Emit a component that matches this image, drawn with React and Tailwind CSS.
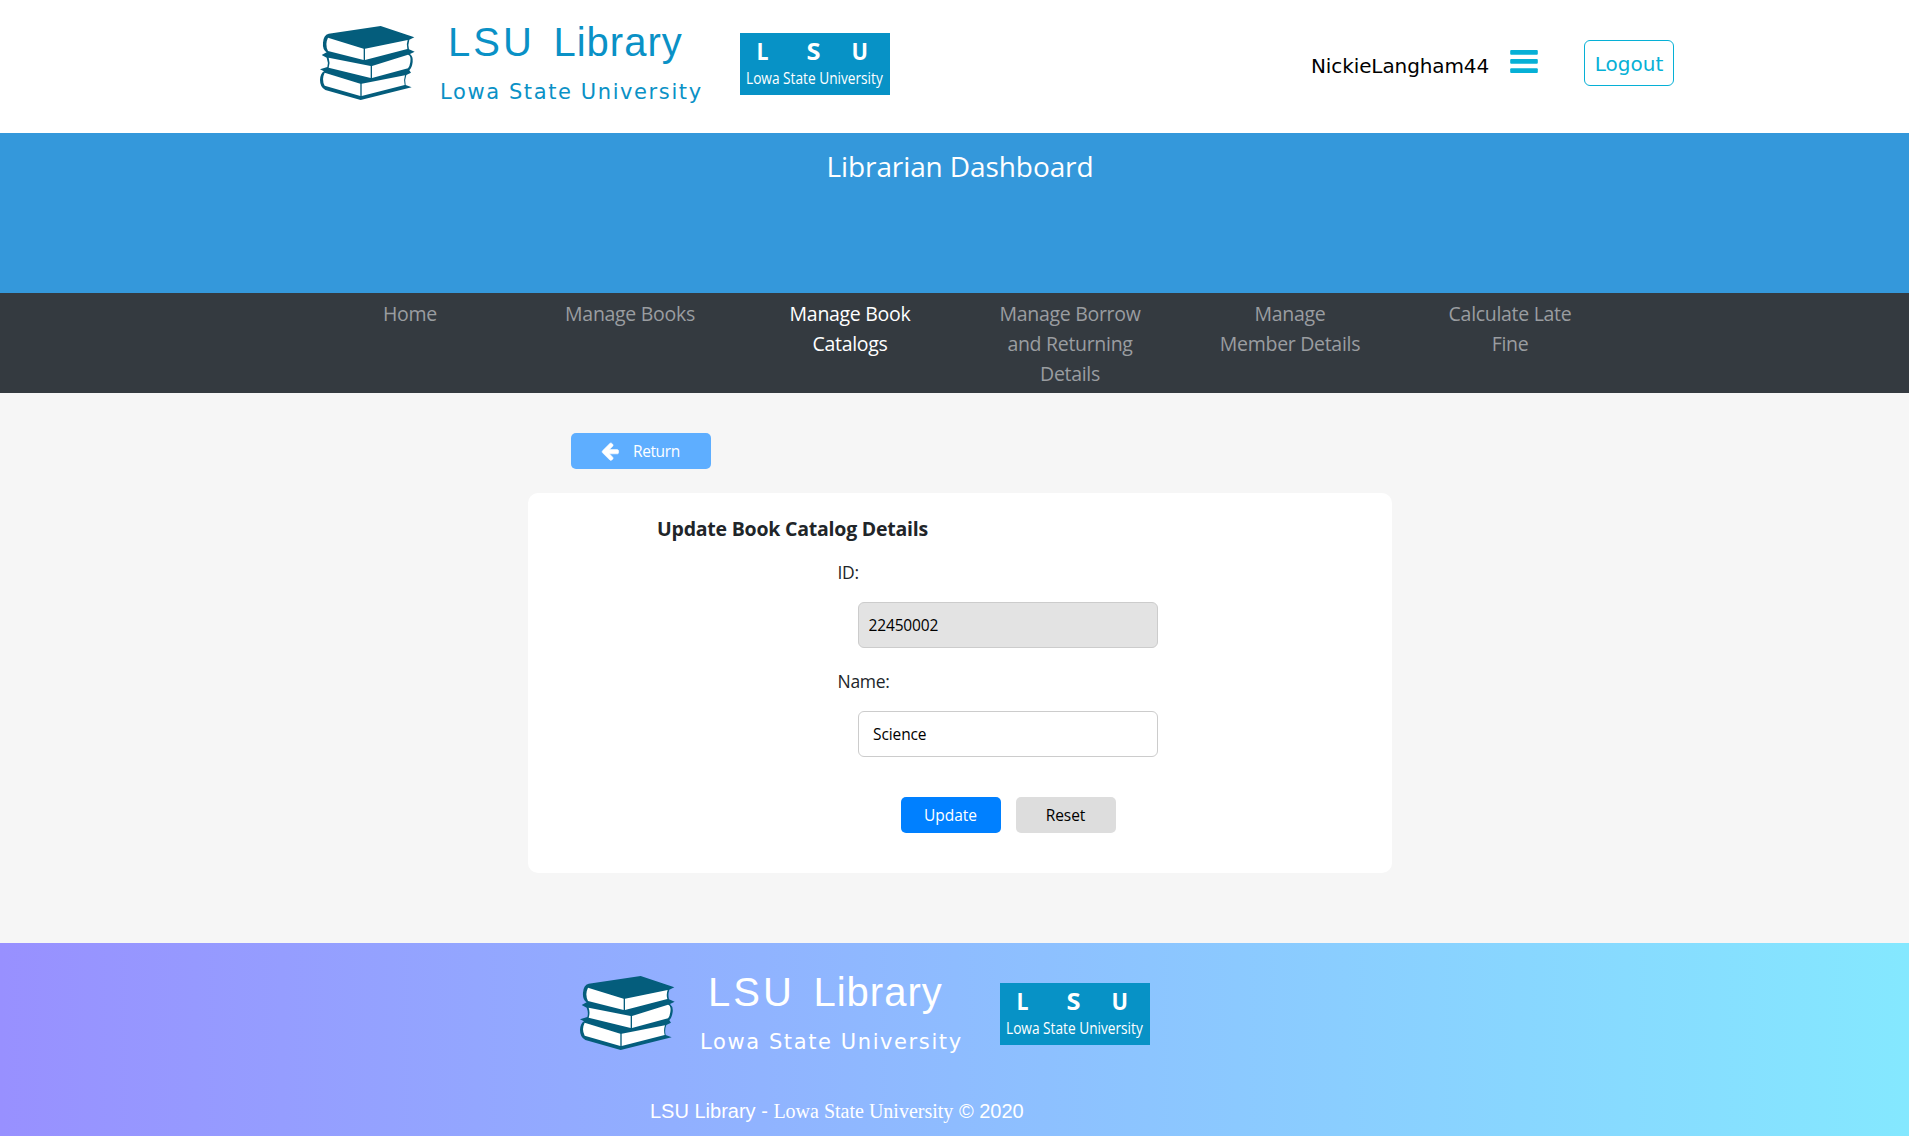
import React from "react";

function Books() {
  return (
    <svg viewBox="0 0 345 285" className="mt-[15.5px] h-[95px] w-[115px] shrink-0">
      <path
        fill="#045d7c"
        d="M56 53L212 30L313 64L298 71Q293 86 297 100L314 107L300 114Q310 122 308 138Q306 155 298 163L303 170L289 177Q283 192 287 207L305 214L152 252L46 222Q30 214 30 192Q31 172 42 166L30 160L52 153Q56 140 50 125L35 117L50 109Q37 100 39 80Q40 57 56 53Z"
      />
      <path
        fill="#fff"
        d="M54 65L161 98V132L54 105Q44 85 54 65ZM165 98L293 72Q288 85 292 99L165 132ZM56 125L182 150V186L56 155Q61 140 56 125ZM186 150L294 116Q304 119 301 138Q299 152 294 157L186 186ZM44 170L151 203V240L44 209Q34 190 44 170ZM155 203L285 178Q280 192 284 207L155 240Z"
      />
    </svg>
  );
}

function Badge() {
  return (
    <svg viewBox="0 0 150 62" className="mt-[33px] h-[62px] w-[150px] shrink-0 bg-[#0792c6]" fill="#fff" fontFamily="'Open Sans', 'Noto Sans', sans-serif">
      <g fontSize="23.5" fontWeight="700">
        <text x="16.5" y="27" textLength="12" lengthAdjust="spacingAndGlyphs">L</text>
        <text x="66.5" y="27" textLength="14" lengthAdjust="spacingAndGlyphs">S</text>
        <text x="111.5" y="27" textLength="16.5" lengthAdjust="spacingAndGlyphs">U</text>
      </g>
      <text transform="translate(6 50.5) scale(0.805 1)" fontSize="17" fontWeight="500">Lowa State University</text>
    </svg>
  );
}

function Brand() {
  return (
    <div className="flex items-start">
      <Books />
      <div className="ml-[15px] w-[300px] whitespace-nowrap pt-[19px]">
        <div className="pl-[8px] font-['Liberation_Sans',sans-serif] text-[40px] leading-[46px] tracking-[3px] [word-spacing:4.5px]">
          LSU <span className="tracking-[1px]">Library</span>
        </div>
        <div className="mt-[12px] font-['DejaVu_Sans',sans-serif] text-[21px] leading-[30px] tracking-[1.6px]">Lowa State University</div>
      </div>
      <Badge />
    </div>
  );
}

const navItems = [
  ["Home"],
  ["Manage Books"],
  ["Manage Book", "Catalogs"],
  ["Manage Borrow", "and Returning", "Details"],
  ["Manage", "Member Details"],
  ["Calculate Late", "Fine"],
];

export default function App() {
  return (
    <div className="h-[1136px] w-full overflow-hidden bg-[#f6f6f6] font-['Open_Sans','Noto_Sans',sans-serif] text-[#212529]">
      <header className="flex h-[133px] items-start bg-white pl-[310px] text-[#0a91c6]">
        <Brand />
        <div className="ml-[421px] mt-[51px] w-[199px] font-['DejaVu_Sans',sans-serif] text-[20px] leading-[30px] tracking-[-0.1px] text-black">NickieLangham44</div>
        <svg viewBox="0 0 28 23" className="mt-[50px] h-[23px] w-[28px] shrink-0" fill="#06b0d6">
          <rect x="0.2" y="0" width="27.6" height="4.8" rx="1" />
          <rect x="0.2" y="9" width="27.6" height="4.8" rx="1" />
          <rect x="0.2" y="18.2" width="27.6" height="4.8" rx="1" />
        </svg>
        <button className="ml-[46px] mt-[40px] h-[46px] w-[90px] rounded-[6px] border border-[#06b0d6] pt-[2px] font-['DejaVu_Sans',sans-serif] text-[20px] text-[#06b0d6]">Logout</button>
      </header>

      <div className="h-[160px] bg-[#3498db] pl-[11px] pt-[12px] text-center text-[28px] leading-[42px] tracking-[-0.1px] text-white">Librarian Dashboard</div>

      <nav className="h-[100px] bg-[#343a40] pl-[300px] pt-[6px]">
        <ul className="grid w-[1320px] grid-cols-6 text-center text-[19.5px] leading-[30px] tracking-[-0.3px]">
          {navItems.map((lines) => (
            <li key={lines.join(" ")} className={lines[1] === "Catalogs" ? "text-white" : "text-[#9a9da0]"}>
              {lines.map((l) => (
                <span key={l} className="block">{l}</span>
              ))}
            </li>
          ))}
        </ul>
      </nav>

      <main className="h-[550px] pl-[528px] pt-[40px]">
        <button className="ml-[43px] flex h-[36px] w-[140px] items-center rounded-[5px] bg-[#5eaeff] pl-[29px] text-[15.5px] tracking-[-0.4px] text-white">
          <svg viewBox="0 0 1792 1792" className="mb-[1px] h-[20px] w-[20px]" fill="currentColor" stroke="currentColor" strokeWidth="50">
            <path d="M1664 896v128q0 53-32.5 90.5t-84.5 37.5h-704l293 294q38 36 38 90t-38 90l-75 76q-37 37-90 37-52 0-91-37l-651-652q-37-37-37-90 0-52 37-91l651-650q38-38 91-38 52 0 90 38l75 74q38 38 38 91t-38 91l-293 293h704q52 0 84.5 37.5t32.5 90.5z" />
          </svg>
          <span className="ml-[13px] pt-[2px]">Return</span>
        </button>

        <section className="mt-[24px] h-[380px] w-[864px] rounded-[10px] bg-white pt-[21px]">
          <h2 className="ml-[129px] text-[19.5px] font-bold leading-[30px] tracking-[-0.22px]">Update Book Catalog Details</h2>
          <form className="ml-[309.5px]">
            <label className="mt-[14px] block text-[17.5px] leading-[28px] tracking-[-0.3px]">ID:</label>
            <input readOnly value="22450002" className="ml-[20px] mt-[16px] block h-[46px] w-[300px] rounded-[6px] border border-[#ccc] bg-[#e3e3e3] px-[10px] text-[15.5px] tracking-[-0.15px] text-black" />
            <label className="mt-[19px] block text-[17.5px] leading-[28px] tracking-[-0.3px]">Name:</label>
            <input defaultValue="Science" className="ml-[20px] mt-[16px] block h-[46px] w-[300px] rounded-[6px] border border-[#ccc] bg-white px-[14.5px] text-[15.5px] tracking-[-0.1px] text-black" />
            <div className="ml-[63px] mt-[40px] flex gap-[15px] text-[15.5px]">
              <button type="button" className="h-[36px] w-[100px] rounded-[5px] bg-[#0080ff] pt-[2px] text-white">Update</button>
              <button type="button" className="h-[36px] w-[100px] rounded-[5px] bg-[#ddd] pt-[2px] tracking-[-0.1px] text-black">Reset</button>
            </div>
          </form>
        </section>
      </main>

      <footer className="h-[193px] bg-[linear-gradient(to_right,#9890ff,#84e8ff)] pl-[570px] pt-[7px] text-white">
        <Brand />
        <p className="ml-[80px] mt-[35px] font-['Liberation_Sans',sans-serif] text-[20px] leading-[30px]">
          LSU Library - <span className="font-['Liberation_Serif',serif]">Lowa State University</span> © 2020
        </p>
      </footer>
    </div>
  );
}
